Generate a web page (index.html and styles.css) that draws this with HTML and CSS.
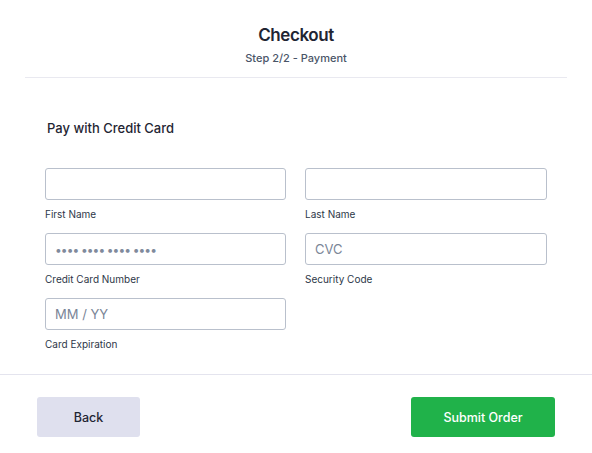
FILE: index.html
```html
<!DOCTYPE html>
<html lang="en">
<head>
<meta charset="utf-8">
<title>Checkout</title>
<link rel="stylesheet" href="styles.css">
</head>
<body>
<div class="page">
  <header class="header">
    <h1 class="title">Checkout</h1>
    <p class="subtitle">Step 2/2 - Payment</p>
  </header>
  <main class="content">
    <h2 class="section-title">Pay with Credit Card</h2>
    <div class="grid">
      <div class="field">
        <input class="input" type="text">
        <label class="label">First Name</label>
      </div>
      <div class="field">
        <input class="input" type="text">
        <label class="label">Last Name</label>
      </div>
      <div class="field">
        <input class="input dots" type="text" placeholder="•••• •••• •••• ••••">
        <label class="label">Credit Card Number</label>
      </div>
      <div class="field">
        <input class="input" type="text" placeholder="CVC">
        <label class="label">Security Code</label>
      </div>
      <div class="field">
        <input class="input" type="text" placeholder="MM / YY">
        <label class="label">Card Expiration</label>
      </div>
    </div>
  </main>
  <footer class="footer">
    <button class="btn btn-back">Back</button>
    <button class="btn btn-submit">Submit Order</button>
  </footer>
</div>
</body>
</html>
```

FILE: styles.css
```css
* { box-sizing: border-box; }
html, body { margin: 0; padding: 0; background: #fff; }
body {
  font-family: Inter, "Noto Sans", "Liberation Sans", sans-serif;
  color: #1a202c;
}
.page { width: 592px; height: 453px; }
.header {
  margin: 0 25px;
  padding: 25px 0 12px;
  border-bottom: 1px solid #e9e9f0;
  text-align: center;
}
.title {
  margin: 0;
  font-size: 17px;
  line-height: 20px;
  font-weight: 600;
  letter-spacing: -0.4px;
  color: #1f2533;
}
.subtitle {
  margin: 6px 0 0;
  font-size: 11px;
  line-height: 14px;
  font-weight: 500;
  color: #4a5568;
}
.content {
  padding: 42px 45px 0;
  height: 297px;
  border-bottom: 1px solid #e4e4ee;
}
.section-title {
  margin: 0 0 32px;
  padding-left: 2px;
  font-size: 13px;
  line-height: 16px;
  font-weight: 500;
  color: #1f2533;
}
.grid {
  display: grid;
  grid-template-columns: 241px 242px;
  column-gap: 19px;
  row-gap: 13px;
}
.field { display: flex; flex-direction: column; }
.input {
  height: 32px;
  width: 100%;
  border: 1px solid #b9c0cc;
  border-radius: 3px;
  padding: 0 9px;
  font-family: inherit;
  font-size: 13px;
  color: #2d3748;
  background: #fff;
  outline: none;
}
.input::placeholder { color: #7a8597; }
.dots { font-size: 12px; letter-spacing: -0.9px; }
.dots::placeholder { color: #7f8a9c; }
.label {
  margin-top: 8px;
  font-size: 10px;
  line-height: 12px;
  color: #2d3748;
}
.footer {
  display: flex;
  justify-content: space-between;
  padding: 22px 37px 0;
}
.btn {
  height: 40px;
  border: none;
  border-radius: 3px;
  font-family: inherit;
  font-size: 12.5px;
  font-weight: 500;
}
.btn-back {
  width: 103px;
  background: #dfe0ee;
  color: #1f2533;
}
.btn-submit {
  width: 144px;
  background: #20b24a;
  color: #fff;
}
```
